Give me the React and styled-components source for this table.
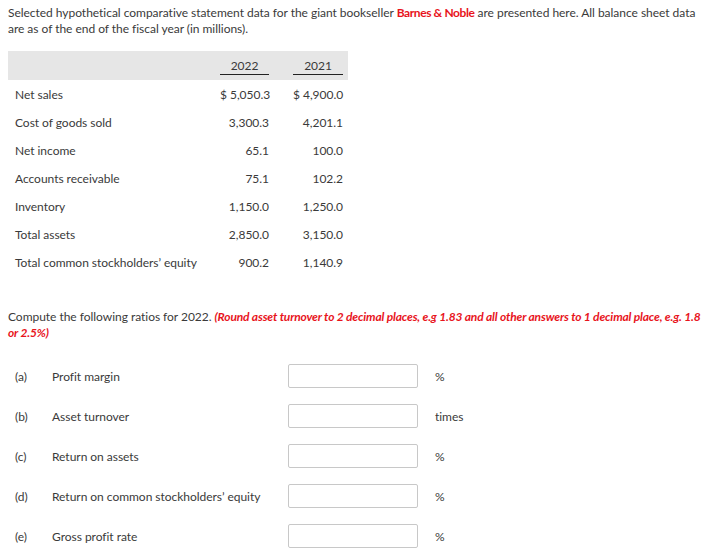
import React from 'react';
import styled, { createGlobalStyle } from 'styled-components';

const rows = [
  ['Net sales', '$ 5,050.3', '$ 4,900.0'],
  ['Cost of goods sold', '3,300.3', '4,201.1'],
  ['Net income', '65.1', '100.0'],
  ['Accounts receivable', '75.1', '102.2'],
  ['Inventory', '1,150.0', '1,250.0'],
  ['Total assets', '2,850.0', '3,150.0'],
  ['Total common stockholders’ equity', '900.2', '1,140.9'],
];

const ratios = [
  ['(a)', 'Profit margin', '%'],
  ['(b)', 'Asset turnover', 'times'],
  ['(c)', 'Return on assets', '%'],
  ['(d)', 'Return on common stockholders’ equity', '%'],
  ['(e)', 'Gross profit rate', '%'],
];

const App = () => (
  <>
    <GlobalStyle />
    <Page>
      <Intro>
        Selected hypothetical comparative statement data for the giant bookseller{' '}
        <Red>Barnes &amp; Noble</Red> are presented here. All balance sheet data
        are as of the end of the fiscal year (in millions).
      </Intro>
      <Table>
        <HeadRow>
          <LabelCell />
          <ValueCell>
            <Year>2022</Year>
          </ValueCell>
          <ValueCell wide>
            <Year>2021</Year>
          </ValueCell>
        </HeadRow>
        {rows.map(([label, a, b]) => (
          <Row key={label}>
            <LabelCell>{label}</LabelCell>
            <ValueCell>{a}</ValueCell>
            <ValueCell wide>{b}</ValueCell>
          </Row>
        ))}
      </Table>
      <Question>
        Compute the following ratios for 2022.{' '}
        <Hint>
          (Round asset turnover to 2 decimal places, e.g 1.83 and all other answers to 1
          decimal place, e.g. 1.8 or 2.5%)
        </Hint>
      </Question>
      <Answers>
        {ratios.map(([letter, name, unit]) => (
          <AnswerRow key={letter}>
            <Letter>{letter}</Letter>
            <Name>{name}</Name>
            <Input type="text" />
            <Unit>{unit}</Unit>
          </AnswerRow>
        ))}
      </Answers>
    </Page>
  </>
);

const GlobalStyle = createGlobalStyle`
  body {
    margin: 0;
    background: #fff;
    font-family: Lato, "Liberation Sans", sans-serif;
    font-size: 12px;
    letter-spacing: -0.03px;
    color: #3a3a3a;
  }
`;

const Page = styled.div`
  padding: 5px 8px 0;
  width: 712px;
  box-sizing: border-box;
`;

const Intro = styled.p`
  margin: 0;
  line-height: 16px;
`;

const Red = styled.span`
  color: #e8141c;
  font-weight: 700;
  letter-spacing: -0.4px;
`;

const Table = styled.div`
  margin-top: 14px;
  width: 340px;
`;

const Row = styled.div`
  display: flex;
  align-items: center;
  height: 28px;
`;

const HeadRow = styled(Row)`
  height: 29px;
  background: #e6e6e6;
`;

const LabelCell = styled.div`
  width: 207px;
  padding-left: 7px;
  box-sizing: border-box;
  white-space: nowrap;
`;

const ValueCell = styled.div`
  width: ${(p) => (p.wide ? '74px' : '59px')};
  padding: 0 5px 0 ${(p) => (p.wide ? '19px' : '5px')};
  box-sizing: border-box;
  text-align: right;
  white-space: nowrap;
`;

const Year = styled.div`
  text-align: center;
  border-bottom: 1px solid #222;
  padding-top: 2px;
  padding-bottom: 1px;
`;

const Question = styled.p`
  margin: 33px 0 0;
  line-height: 16px;
`;

const Hint = styled.span`
  color: #e8141c;
  font-weight: 700;
  font-style: italic;
  letter-spacing: -0.16px;
`;

const Answers = styled.div`
  margin-top: 23px;
  display: flex;
  flex-direction: column;
  gap: 16px;
`;

const AnswerRow = styled.div`
  display: grid;
  grid-template-columns: 37px 236px 130px auto;
  align-items: center;
  padding-left: 7px;
  height: 24px;
`;

const Letter = styled.span``;

const Name = styled.span`
  white-space: nowrap;
`;

const Input = styled.input`
  width: 130px;
  height: 24px;
  box-sizing: border-box;
  border: 1px solid #c8c8c8;
  border-radius: 2px;
  background: #fff;
  margin: 0;
`;

const Unit = styled.span`
  padding-left: 17px;
`;

export default App;
